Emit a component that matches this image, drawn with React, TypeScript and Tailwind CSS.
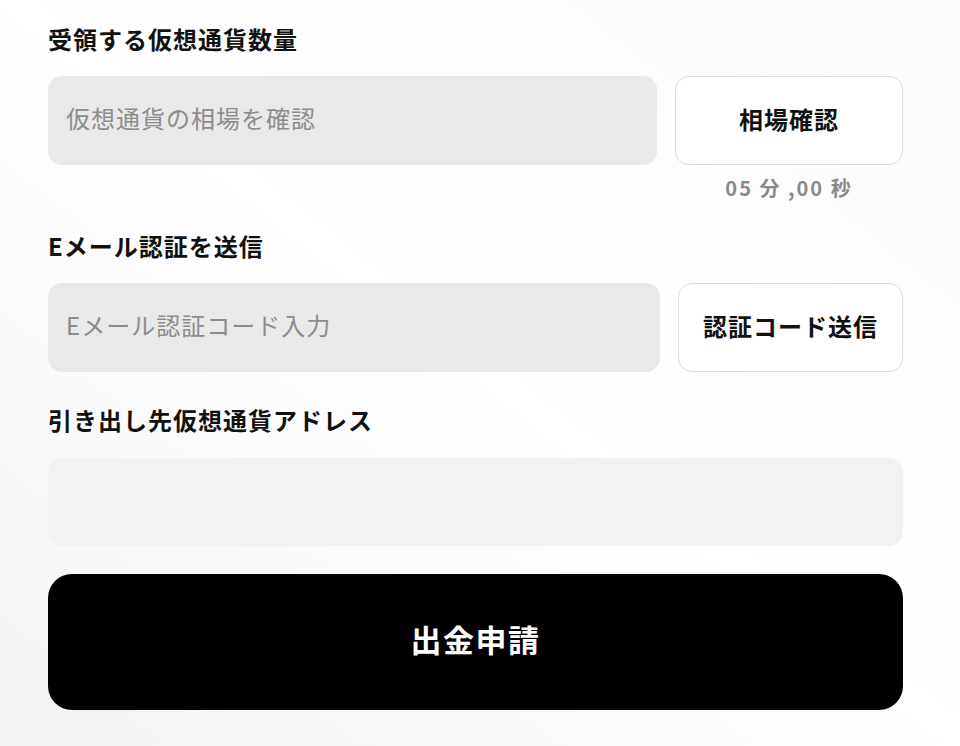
import React from "react";

const font = { fontFamily: '"Noto Sans CJK JP", "Noto Sans", sans-serif' };

const Label: React.FC<{ children: React.ReactNode }> = ({ children }) => (
  <p className="text-[24px] font-bold text-[#111] tracking-[1px] leading-none">{children}</p>
);

export default function App() {
  return (
    <div
      className="min-h-[746px] w-[960px] bg-gradient-to-tr from-[#f4f4f4] via-white to-[#fbfbfb] pl-12 pr-[57px] pt-[27px]"
      style={font}
    >
      {/* Amount */}
      <Label>受領する仮想通貨数量</Label>
      <div className="mt-[25px] flex gap-[18px]">
        <div className="flex h-[89px] flex-1 items-center rounded-[14px] bg-[#e9e9e9] px-[18px] pb-[6px]">
          <span className="text-[24px] tracking-[1px] text-[#8c8c8c]">仮想通貨の相場を確認</span>
        </div>
        <div className="flex w-[228px] flex-col items-center">
          <button className="flex h-[89px] w-full items-center justify-center rounded-[14px] border border-[#dcdcdc] bg-white pb-[4px] text-[24px] font-bold tracking-[1px] text-[#111]">
            相場確認
          </button>
          <p className="mt-[13px] mb-[2px] text-[20px] font-bold tracking-[2px] text-[#8a8a8a] leading-none">05 分 ,00 秒</p>
        </div>
      </div>

      {/* Email */}
      <div className="mt-[34px]">
        <Label>Eメール認証を送信</Label>
      </div>
      <div className="mt-[25px] flex gap-[18px]">
        <div className="flex h-[89px] flex-1 items-center rounded-[14px] bg-[#e9e9e9] px-[18px] pb-[6px]">
          <span className="text-[24px] tracking-[1px] text-[#8c8c8c]">Eメール認証コード入力</span>
        </div>
        <button className="flex h-[89px] w-[225px] items-center justify-center rounded-[14px] border border-[#dcdcdc] bg-white pb-[4px] text-[24px] font-bold tracking-[1px] text-[#111]">
          認証コード送信
        </button>
      </div>

      {/* Address */}
      <div className="mt-[36px]">
        <Label>引き出し先仮想通貨アドレス</Label>
      </div>
      <div className="mt-[26px] h-[88px] w-full rounded-[14px] bg-[#f2f2f2]" />

      <button className="mt-[28px] flex h-[136px] w-full items-center justify-center rounded-[24px] bg-black pb-[6px] text-[31px] font-bold tracking-[1.5px] text-white">
        出金申請
      </button>
    </div>
  );
}
